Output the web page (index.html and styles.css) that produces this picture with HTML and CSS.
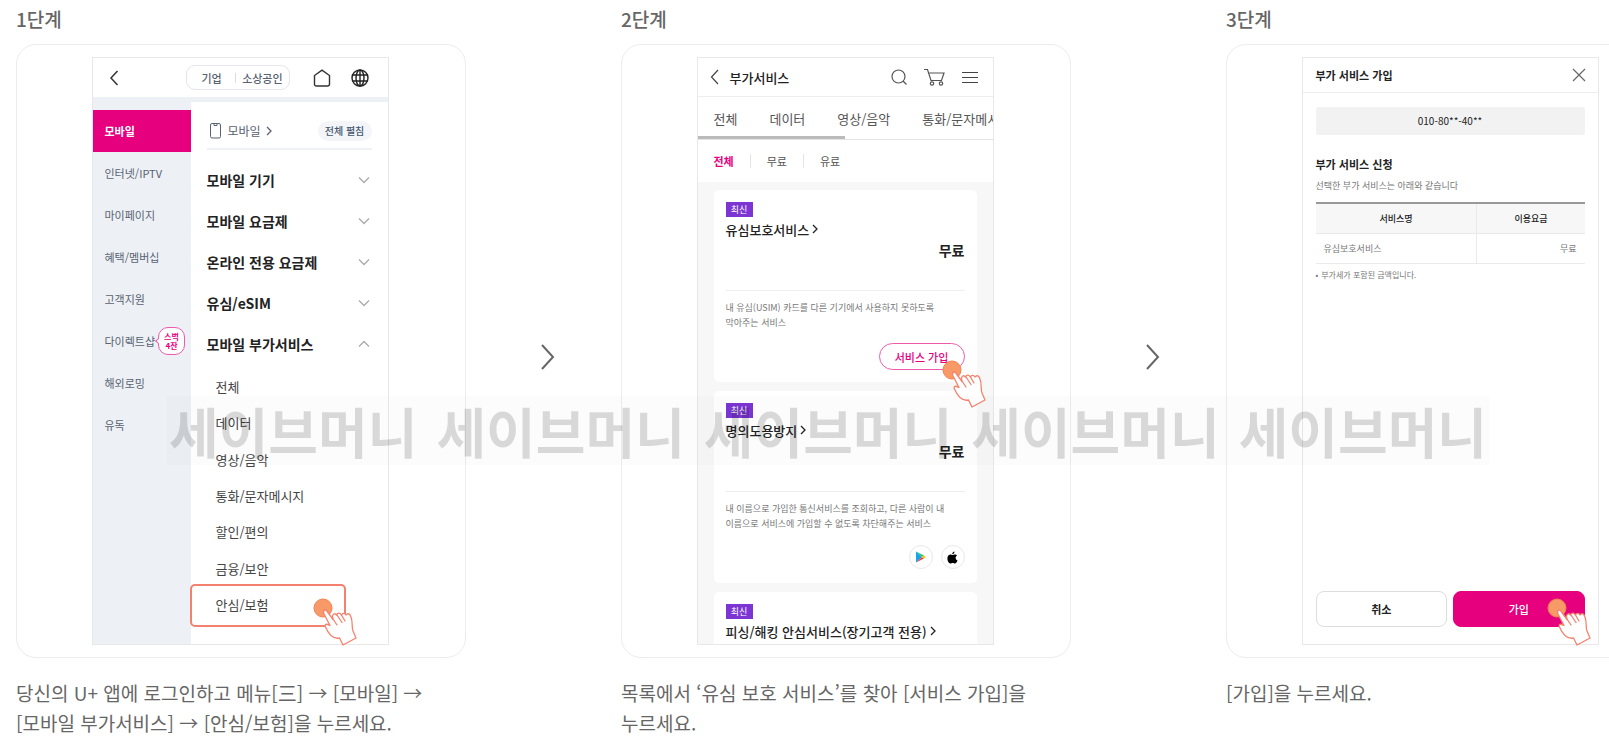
FILE: index.html
```html
<!DOCTYPE html>
<html lang="ko">
<head>
<meta charset="utf-8">
<title>유심 보호 서비스 가입 방법</title>
<link rel="stylesheet" href="styles.css">
</head>
<body>
<svg class="defs" aria-hidden="true">
  <symbol id="tap" viewBox="0 0 46 48">
    <circle cx="10" cy="10" r="9" fill="#f79a68" stroke="#f5814f"/>
    <path d="M10.500 13.500C11 11.500 13.200 11.500 14.200 13.500L20 21.500L19.500 18C20 15.500 22 15 23.500 17L24 16C25.500 14.500 27 15 28.500 17C29.500 15 31.500 14.500 33 17C35 14.500 37 16 38 19C40 24 38.500 30 40 33L43 40L30 47L26.500 40C20 41.500 15 35 12 28C12.500 25 15 26.500 17 27.500L11 16Z" fill="#fff" stroke="#f5826c" stroke-width="1.300" stroke-linejoin="round"/>
    <path d="M20 21l4 6M24 17l5 7.500M28.500 17l3.500 6" fill="none" stroke="#f5826c" stroke-width="1.300" stroke-linecap="round"/>
  </symbol>
  <symbol id="down" viewBox="0 0 12 8"><path d="M1 1.500l5 5 5-5" fill="none" stroke="#aaa" stroke-width="1.300"/></symbol>
  <symbol id="right" viewBox="0 0 6 10"><path d="M1 1l4 4-4 4" fill="none" stroke="currentColor" stroke-width="1.300"/></symbol>
</svg>

<main class="steps">
  <section class="step">
    <h2 class="step-title">1단계</h2>
    <div class="frame">
      <div class="phone menu-screen">
        <header class="menu-head">
          <button class="icon-btn" aria-label="뒤로"><svg width="10" height="16" viewBox="0 0 10 16"><path d="M8.500 1L2 8l6.500 7" fill="none" stroke="#333" stroke-width="1.500"/></svg></button>
          <div class="biz"><a href="#">기업</a><i></i><a href="#">소상공인</a></div>
          <button class="icon-btn home" aria-label="홈"><svg width="18" height="18" viewBox="0 0 18 18"><path d="M1.500 6.500L9 1.200 16.500 6.500V15q0 2-2 2H3.500q-2 0-2-2Z" fill="none" stroke="#333" stroke-width="1.400"/></svg></button>
          <button class="icon-btn" aria-label="언어"><svg width="18" height="18" viewBox="0 0 18 18" fill="none" stroke="#222" stroke-width="1.400"><circle cx="9" cy="9" r="8"/><ellipse cx="9" cy="9" rx="4" ry="8"/><path d="M9 1v16M1.500 6h15M1.500 12h15"/></svg></button>
        </header>
        <div class="menu-body">
          <nav class="side">
            <a class="on" href="#">모바일</a>
            <a href="#">인터넷/IPTV</a>
            <a href="#">마이페이지</a>
            <a href="#">혜택/멤버십</a>
            <a href="#">고객지원</a>
            <a href="#">다이렉트샵<span class="bubble">스벅<br>4잔</span></a>
            <a href="#">해외로밍</a>
            <a href="#">유독</a>
          </nav>
          <div class="menu-main">
            <div class="menu-cat">
              <svg width="11" height="16" viewBox="0 0 11 16" fill="none" stroke="#596270"><rect x=".5" y=".5" width="10" height="14.500" rx="1.500"/><path d="M4 1v1.500h3V1"/></svg>
              <a href="#">모바일</a>
              <svg class="cat-arrow" width="6" height="10"><use href="#right"/></svg>
              <button class="expand">전체 펼침</button>
            </div>
            <ul class="groups">
              <li>모바일 기기<svg width="12" height="8"><use href="#down"/></svg></li>
              <li>모바일 요금제<svg width="12" height="8"><use href="#down"/></svg></li>
              <li>온라인 전용 요금제<svg width="12" height="8"><use href="#down"/></svg></li>
              <li>유심/eSIM<svg width="12" height="8"><use href="#down"/></svg></li>
              <li>모바일 부가서비스<svg class="up" width="12" height="8"><use href="#down"/></svg></li>
            </ul>
            <ul class="subs">
              <li>전체</li><li>데이터</li><li>영상/음악</li><li>통화/문자메시지</li><li>할인/편의</li><li>금융/보안</li><li class="picked">안심/보험</li>
            </ul>
          </div>
        </div>
        <svg class="tap tap-menu" width="46" height="48"><use href="#tap"/></svg>
      </div>
    </div>
    <p class="caption">당신의 U+ 앱에 로그인하고 메뉴[三] → [모바일] →<br>[모바일 부가서비스] → [안심/보험]을 누르세요.</p>
  </section>

  <svg class="next" width="16" height="28" viewBox="0 0 16 28"><path d="M2 2l11 12L2 26" fill="none" stroke="#666" stroke-width="2"/></svg>

  <section class="step">
    <h2 class="step-title">2단계</h2>
    <div class="frame">
      <div class="phone">
        <div class="screen-clip">
        <header class="list-head">
          <button class="icon-btn" aria-label="뒤로"><svg width="9" height="16" viewBox="0 0 9 16"><path d="M8 1L1.500 8 8 15" fill="none" stroke="#444" stroke-width="1.200"/></svg></button>
          <h3>부가서비스</h3>
          <button class="icon-btn" aria-label="검색"><svg width="16" height="16" viewBox="0 0 16 16" fill="none" stroke="#555" stroke-width="1.200"><circle cx="7.500" cy="7.500" r="6.500"/><path d="M12 12l3.500 3.500"/></svg></button>
          <button class="icon-btn" aria-label="장바구니"><svg width="21" height="18" viewBox="0 0 21 18" fill="none" stroke="#555" stroke-width="1.200"><path d="M0 1.500h3.500L7 12.500h10.500L20 5H4.600"/><circle cx="8" cy="15.500" r="1.700"/><circle cx="17" cy="15.500" r="1.700"/></svg></button>
          <button class="icon-btn" aria-label="메뉴"><svg width="16" height="13" viewBox="0 0 16 13"><path d="M0 1.500h16M0 6.500h16M0 11.500h16" stroke="#444"/></svg></button>
        </header>
        <nav class="tabs"><a href="#">전체</a><a href="#">데이터</a><a href="#">영상/음악</a><a href="#">통화/문자메시지</a></nav>
        <nav class="filters"><a class="on" href="#">전체</a><a href="#">무료</a><a href="#">유료</a></nav>
        <div class="cards">
          <article class="card">
            <span class="tag">최신</span>
            <h4>유심보호서비스<svg width="6" height="10"><use href="#right"/></svg></h4>
            <strong class="price">무료</strong>
            <p>내 유심(USIM) 카드를 다른 기기에서 사용하지 못하도록<br>막아주는 서비스</p>
            <button class="join">서비스 가입</button>
          </article>
          <article class="card">
            <span class="tag">최신</span>
            <h4>명의도용방지<svg width="6" height="10"><use href="#right"/></svg></h4>
            <strong class="price">무료</strong>
            <p>내 이름으로 가입한 통신서비스를 조회하고, 다른 사람이 내<br>이름으로 서비스에 가입할 수 없도록 차단해주는 서비스</p>
            <div class="stores">
              <a href="#" aria-label="Google Play"><svg width="10" height="12" viewBox="0 0 10 12"><path d="M0 .5L6 6 0 11.500Z" fill="#16a5e8"/><path d="M0 .5L8 4.500 6 6Z" fill="#25c277"/><path d="M0 11.500L8 7.500 6 6Z" fill="#ee3f4d"/><path d="M7.500 4.300L10 6 7.500 7.700 5.500 6Z" fill="#fbc116"/></svg></a>
              <a href="#" aria-label="App Store"><svg width="11" height="13" viewBox="0 0 22 26"><path d="M15 1c.3 3-2 5.500-4.500 5.500C10.200 4 12.500 1.300 15 1ZM20 9c-4 2.500-3.500 8 1 10-1 3-3 6-5 6s-2.500-1-4.500-1-3 1-4.500 1C3 25 0 18 1 13c.8-4.500 4-6 6-5.800 1.800.1 3 1 4.300 1s2.700-1.200 4.700-1.200c1.700 0 3.200.9 4 2Z" fill="#000"/></svg></a>
            </div>
          </article>
          <article class="card">
            <span class="tag">최신</span>
            <h4>피싱/해킹 안심서비스(장기고객 전용)<svg width="6" height="10"><use href="#right"/></svg></h4>
          </article>
        </div>
        </div>
        <svg class="tap tap-list" width="46" height="48"><use href="#tap"/></svg>
      </div>
    </div>
    <p class="caption">목록에서 ‘유심 보호 서비스’를 찾아 [서비스 가입]을<br>누르세요.</p>
  </section>

  <svg class="next" width="16" height="28" viewBox="0 0 16 28"><path d="M2 2l11 12L2 26" fill="none" stroke="#666" stroke-width="2"/></svg>

  <section class="step">
    <h2 class="step-title">3단계</h2>
    <div class="frame">
      <div class="phone">
        <header class="join-head">
          <h3>부가 서비스 가입</h3>
          <button class="icon-btn" aria-label="닫기"><svg width="14" height="14" viewBox="0 0 14 14"><path d="M1 1l12 12M13 1L1 13" stroke="#666" stroke-width="1.200"/></svg></button>
        </header>
        <div class="join-body">
          <div class="number">010-80**-40**</div>
          <h4>부가 서비스 신청</h4>
          <p class="lead">선택한 부가 서비스는 아래와 같습니다</p>
          <table class="fees">
            <tr><th>서비스명</th><th>이용요금</th></tr>
            <tr><td>유심보호서비스</td><td>무료</td></tr>
          </table>
          <p class="note">부가세가 포함된 금액입니다.</p>
          <div class="actions"><button>취소</button><button class="primary">가입</button></div>
        </div>
        <svg class="tap tap-join" width="46" height="48"><use href="#tap"/></svg>
      </div>
    </div>
    <p class="caption">[가입]을 누르세요.</p>
  </section>
</main>

<div class="watermark" aria-hidden="true"><span>세이브머니</span><span>세이브머니</span><span>세이브머니</span><span>세이브머니</span><span>세이브머니</span></div>
</body>
</html>
```

FILE: styles.css
```css
* { box-sizing: border-box; }
body, h2, h3, h4, p, ul { margin: 0; padding: 0; }
ul { list-style: none; }
body {
  position: relative;
  overflow: hidden;
  background: #fff;
  color: #222;
  font-family: "Noto Sans CJK KR", "Noto Sans", sans-serif;
}
a { color: inherit; text-decoration: none; }
button { margin: 0; padding: 0; border: 0; background: none; font: inherit; color: inherit; }
svg { display: block; flex: none; }
.defs { position: absolute; width: 0; height: 0; }

.steps { display: flex; padding: 4px 16px 0; }
.step { flex: none; width: 450px; }
.step-title { font-size: 19px; line-height: 30px; font-weight: 500; color: #666; }
.frame {
  display: flex;
  justify-content: center;
  margin-top: 10px;
  padding: 12px 2px 12px 0;
  border: 1px solid #ececec;
  border-radius: 20px;
}
.caption { margin-top: 20px; font-size: 19px; line-height: 30px; color: #666; white-space: nowrap; }
.next { margin: 339px 65px 0 74px; }

.phone {
  position: relative;
  display: flex;
  flex-direction: column;
  width: 297px;
  height: 588px;
  border: 1px solid #e8e8e8;
}
.icon-btn { display: block; }
.tap { position: absolute; }
.tap-menu { left: 220px; bottom: -2px; }
.tap-list { left: 244px; top: 302px; }
.tap-join { left: 244px; bottom: -2px; }

/* Step 1: full menu */
.menu-head { display: flex; align-items: center; height: 39px; padding: 0 18px 0 16px; }
.biz {
  display: flex;
  align-items: center;
  justify-content: space-around;
  width: 104px;
  height: 25px;
  margin-left: 67px;
  padding: 0 3px 0 12px;
  border: 1px solid #e3e6ee;
  border-radius: 9px;
  color: #596270;
  font-size: 11px;
  font-weight: 500;
}
.biz i { width: 1px; height: 10px; margin-left: 8px; background: #ddd; }
.home { margin: 0 20px 0 23px; }
.menu-body { display: flex; flex: 1; border-top: 5px solid #edf1f6; }
.side { width: 98px; padding-top: 8px; background: #edf1f6; }
.side a {
  display: flex;
  align-items: center;
  height: 42px;
  padding-left: 12px;
  font-size: 11px;
  color: #596270;
  white-space: nowrap;
}
.side .on { background: #e6007e; color: #fff; font-weight: 700; }
.bubble {
  position: relative;
  margin-left: 3px;
  padding: 4px 5px;
  border: 1px solid #ee5aac;
  border-radius: 10px;
  background: #fff;
  color: #e6007e;
  font-size: 8px;
  line-height: 9px;
  font-weight: 700;
  text-align: center;
}
.bubble::before {
  content: "";
  position: absolute;
  left: -3px;
  top: 11px;
  width: 3px;
  height: 3px;
  border: solid #ee5aac;
  border-width: 0 0 1px 1px;
  background: #fff;
  transform: rotate(45deg);
}
.menu-main { flex: 1; display: flex; flex-direction: column; padding: 11px 16px 12px; }
.menu-cat {
  display: flex;
  align-items: center;
  height: 37px;
  padding: 0 0 0 3px;
  border-bottom: 2px solid #edf1f6;
  color: #596270;
  font-size: 12px;
}
.menu-cat a { margin: 0 5px 0 7px; }
.expand {
  margin-left: auto;
  width: 54px;
  height: 20px;
  border-radius: 10px;
  background: #f3f5f8;
  color: #44566f;
  font-size: 10px;
  font-weight: 500;
}
.groups { margin-top: 9px; }
.groups li {
  display: flex;
  align-items: center;
  justify-content: space-between;
  height: 41px;
  padding-right: 2px;
  font-size: 14px;
  font-weight: 700;
}
.up { transform: rotate(180deg); }
.subs {
  flex: 1;
  display: flex;
  flex-direction: column;
  justify-content: space-between;
  padding: 7px 0 11px 9px;
  font-size: 13px;
  line-height: 32px;
  color: #444;
}
.picked { position: relative; }
.picked::before {
  content: "";
  position: absolute;
  box-sizing: border-box;
  left: -26px;
  top: -5px;
  width: 156px;
  height: 43px;
  border: 2px solid #f4806e;
  border-radius: 5px;
}

/* Step 2: service list */
.screen-clip { flex: 1; display: flex; flex-direction: column; min-height: 0; overflow: hidden; }
.list-head {
  display: flex;
  align-items: center;
  flex: none;
  gap: 17px;
  height: 39px;
  padding: 0 15px 0 12px;
  border-bottom: 1px solid #eee;
}
.list-head h3 { margin-right: auto; margin-left: -6px; font-size: 13px; font-weight: 500; }
.tabs {
  position: relative;
  display: flex;
  align-items: center;
  flex: none;
  gap: 32px;
  height: 43px;
  padding: 0 0 0 16px;
  overflow: hidden;
  border-bottom: 1px solid #e5e5e5;
  color: #555;
  font-size: 13px;
  white-space: nowrap;
}
.tabs::after {
  content: "";
  position: absolute;
  left: 0;
  bottom: 0;
  width: 50%;
  height: 3px;
  background: #bbb;
}
.filters { display: flex; align-items: center; flex: none; height: 42px; padding-left: 16px; font-size: 11px; color: #555; }
.filters a + a { margin-left: 16px; padding-left: 16px; border-left: 1px solid #e5e5e5; line-height: 14px; }
.filters .on { color: #e6007e; font-weight: 700; }
.cards { flex: 1; display: flex; flex-direction: column; gap: 9px; padding: 8px 16px 0; background: #f7f7f7; }
.card {
  display: flex;
  flex-direction: column;
  flex: none;
  min-height: 192px;
  padding: 12px;
  border-radius: 5px;
  background: #fff;
}
.tag { align-self: flex-start; width: 27px; background: #7c35d3; color: #fff; font-size: 9px; line-height: 15px; text-align: center; }
.card h4 { display: flex; align-items: center; gap: 3px; height: 24px; font-size: 13px; font-weight: 500; white-space: nowrap; }
.price { height: 50px; border-bottom: 1px solid #eee; font-size: 14px; line-height: 19px; text-align: right; }
.card p { margin-top: 9px; color: #777; font-size: 9px; line-height: 15px; white-space: nowrap; }
.join {
  align-self: flex-end;
  width: 86px;
  height: 27px;
  margin-top: 13px;
  border: 1px solid #ee5aac;
  border-radius: 14px;
  color: #e6007e;
  font-size: 11px;
  font-weight: 500;
}
.stores { display: flex; justify-content: flex-end; gap: 8px; margin-top: 14px; }
.stores a { display: grid; place-items: center; width: 24px; height: 24px; border: 1px solid #e8e8e8; border-radius: 50%; }

/* Step 3: subscription form */
.join-head {
  display: flex;
  align-items: center;
  justify-content: space-between;
  height: 35px;
  padding: 0 12px 0 13px;
  border-bottom: 1px solid #eee;
}
.join-head h3, .join-body h4 { font-size: 11px; line-height: 16px; font-weight: 700; }
.join-body { flex: 1; display: flex; flex-direction: column; padding: 14px 13px 17px; }
.number { border-radius: 2px; background: #f2f2f2; font-size: 10px; line-height: 28px; text-align: center; }
.join-body h4 { margin-top: 21px; }
.lead { margin-top: 6px; color: #777; font-size: 9px; line-height: 16px; }
.fees { width: 100%; margin-top: 8px; border-collapse: collapse; border-top: 2px solid #999; font-size: 9px; }
.fees th, .fees td { height: 30px; padding: 0 8px; border-bottom: 1px solid #eaeaea; }
.fees th { background: #f7f7f7; font-weight: 500; }
.fees td { color: #777; }
.fees th:first-child, .fees td:first-child { width: 60%; border-right: 1px solid #eaeaea; }
.fees td:last-child { text-align: right; }
.note { margin-top: 5px; color: #777; font-size: 8px; line-height: 12px; }
.note::before { content: "•"; margin-right: 3px; }
.actions { display: grid; grid-template-columns: 1fr 1fr; gap: 6px; margin-top: auto; }
.actions button { height: 36px; border: 1px solid #ddd; border-radius: 8px; font-size: 11px; font-weight: 700; }
.actions .primary { border-color: #e6007e; background: #e6007e; color: #fff; font-weight: 500; }

.watermark {
  position: absolute;
  left: 167px;
  top: 396px;
  display: flex;
  gap: 19px;
  padding: 0 2px;
  background: rgba(0, 0, 0, .01);
  color: rgba(0, 0, 0, .14);
  font-size: 54px;
  line-height: 69px;
  font-weight: 700;
  white-space: nowrap;
  pointer-events: none;
}
```
